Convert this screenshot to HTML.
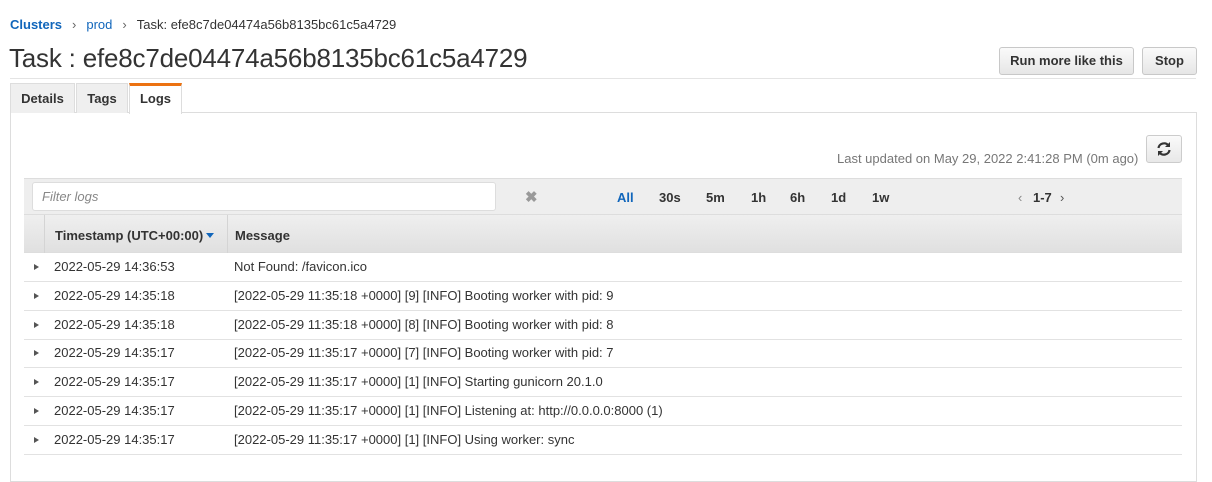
<!DOCTYPE html>
<html><head><meta charset="utf-8"><style>
*{box-sizing:border-box;margin:0;padding:0}
body{width:1212px;height:472px;background:#fff;font-family:"Liberation Sans",Arial,sans-serif;color:#333;position:relative;overflow:hidden;font-size:13px}
.a{position:absolute}
.bc{top:17px;left:10px;font-size:13px;color:#333}
.bc b{color:#1166bb}
.bc span.l{color:#1166bb}
.bc i{font-style:normal;color:#666;margin:0 10px}
h1{position:absolute;top:43px;left:9px;font-size:26px;font-weight:normal;color:#333;letter-spacing:-0.2px}
.btn{position:absolute;top:47px;height:28px;border:1px solid #c8c8c8;border-radius:3px;background:linear-gradient(#fafafa,#e6e6e6);font-weight:bold;font-size:13px;text-align:center;line-height:26px;color:#333}
.hr{top:78px;left:10px;width:1186px;height:1px;background:#e4e4e4}
.tab{position:absolute;top:83px;height:30px;background:#efefef;border:1px solid #ddd;border-bottom:none;font-weight:bold;font-size:13px;text-align:center;line-height:29px;color:#333}
.panel{top:112px;left:10px;width:1187px;height:370px;border:1px solid #ddd;background:#fff}
.upd{top:151px;left:837px;color:#777;font-size:13px}
.ref{top:135px;left:1146px;width:36px;height:28px;border:1px solid #ccc;border-radius:3px;background:linear-gradient(#fafafa,#e8e8e8)}
.tb{top:178px;left:24px;width:1158px;height:37px;background:#eeeeee;border-top:1px solid #ddd;border-bottom:1px solid #ddd}
.flt{top:182px;left:32px;width:464px;height:29px;background:#fff;border:1px solid #ddd;border-radius:3px;color:#888;font-style:italic;padding-left:9px;line-height:27px;font-size:13px}
.rng{top:190px;font-weight:bold;font-size:13px;color:#333}
.hd{top:215px;left:24px;width:1158px;height:38px;background:linear-gradient(#efefef,#e0e0e0);border-bottom:1px solid #ddd}
.row{position:absolute;left:24px;width:1158px;height:29px;border-bottom:1px solid #e2e2e2;font-size:13px;color:#333;line-height:28px}
.row .t{position:absolute;left:30px}
.row .m{position:absolute;left:210px}
.row .c{position:absolute;left:10px;top:11px;width:0;height:0;border-left:5px solid #555;border-top:3.5px solid transparent;border-bottom:3.5px solid transparent}
</style></head><body>
<div class="a bc"><b>Clusters</b><i>›</i><span class="l">prod</span><i>›</i>Task: efe8c7de04474a56b8135bc61c5a4729</div>
<h1>Task : efe8c7de04474a56b8135bc61c5a4729</h1>
<div class="btn" style="left:999px;width:135px">Run more like this</div>
<div class="btn" style="left:1142px;width:55px">Stop</div>
<div class="a hr"></div>
<div class="a panel"></div>
<div class="tab" style="left:10px;width:65px">Details</div>
<div class="tab" style="left:76px;width:52px">Tags</div>
<div class="tab" style="left:129px;width:53px;background:#fff;border-top:3px solid #ec7211;line-height:26px;height:31px">Logs</div>
<div class="a upd">Last updated on May 29, 2022 2:41:28 PM (0m ago)</div>
<div class="a ref"><svg width="34" height="26" viewBox="0 0 34 26"><g fill="none" stroke="#333" stroke-width="2.2"><path d="M11.5 12a5.5 5 0 0 1 10-2.5"/><path d="M22.5 14a5.5 5 0 0 1-10 2.5"/></g><path d="M23 6v5h-5z" fill="#333"/><path d="M11 20v-5h5z" fill="#333"/></svg></div>
<div class="a tb"></div>
<div class="a flt">Filter logs</div>
<div class="a" style="top:188px;left:525px;color:#999;font-size:15px;font-weight:bold">✖</div>
<div class="a rng" style="left:617px;color:#1166bb">All</div>
<div class="a rng" style="left:659px">30s</div>
<div class="a rng" style="left:706px">5m</div>
<div class="a rng" style="left:751px">1h</div>
<div class="a rng" style="left:790px">6h</div>
<div class="a rng" style="left:831px">1d</div>
<div class="a rng" style="left:872px">1w</div>
<div class="a rng" style="left:1018px;font-weight:normal;color:#888">‹</div>
<div class="a rng" style="left:1033px">1-7</div>
<div class="a rng" style="left:1060px;font-weight:normal;color:#555">›</div>
<div class="a hd"></div>
<div class="a" style="top:215px;left:44px;width:1px;height:38px;background:#d4d4d4"></div>
<div class="a" style="top:215px;left:227px;width:1px;height:38px;background:#d4d4d4"></div>
<div class="a" style="top:228px;left:55px;font-weight:bold">Timestamp (UTC+00:00)</div>
<div class="a" style="top:233px;left:206px;width:0;height:0;border-top:5px solid #1166bb;border-left:4px solid transparent;border-right:4px solid transparent"></div>
<div class="a" style="top:228px;left:235px;font-weight:bold">Message</div>
<div class="row" style="top:253px"><span class="c"></span><span class="t">2022-05-29 14:36:53</span><span class="m">Not Found: /favicon.ico</span></div>
<div class="row" style="top:282px"><span class="c"></span><span class="t">2022-05-29 14:35:18</span><span class="m">[2022-05-29 11:35:18 +0000] [9] [INFO] Booting worker with pid: 9</span></div>
<div class="row" style="top:311px"><span class="c"></span><span class="t">2022-05-29 14:35:18</span><span class="m">[2022-05-29 11:35:18 +0000] [8] [INFO] Booting worker with pid: 8</span></div>
<div class="row" style="top:339px"><span class="c"></span><span class="t">2022-05-29 14:35:17</span><span class="m">[2022-05-29 11:35:17 +0000] [7] [INFO] Booting worker with pid: 7</span></div>
<div class="row" style="top:368px"><span class="c"></span><span class="t">2022-05-29 14:35:17</span><span class="m">[2022-05-29 11:35:17 +0000] [1] [INFO] Starting gunicorn 20.1.0</span></div>
<div class="row" style="top:397px"><span class="c"></span><span class="t">2022-05-29 14:35:17</span><span class="m">[2022-05-29 11:35:17 +0000] [1] [INFO] Listening at: http://0.0.0.0:8000 (1)</span></div>
<div class="row" style="top:426px"><span class="c"></span><span class="t">2022-05-29 14:35:17</span><span class="m">[2022-05-29 11:35:17 +0000] [1] [INFO] Using worker: sync</span></div>
</body></html>
